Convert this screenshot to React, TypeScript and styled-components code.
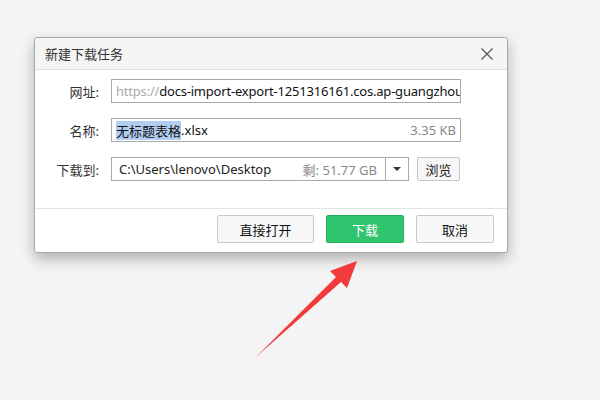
import styled, { createGlobalStyle } from 'styled-components';

const GlobalStyle = createGlobalStyle`
	html, body {
		margin: 0;
		padding: 0;
		background: #f4f4f4;
		font-family: "Noto Sans", "Noto Sans CJK SC", sans-serif;
	}
`;

const FONT = `"Noto Sans", "Noto Sans CJK SC", sans-serif`;

const Page = styled.div`
	position: relative;
	width: 600px;
	height: 400px;
	padding: 37px 0 0 34px;
	box-sizing: border-box;
	overflow: hidden;
`;

const Dialog = styled.div`
	width: 474px;
	background: #fff;
	border: 1px solid #a8a8a8;
	border-radius: 3px;
	box-sizing: border-box;
	box-shadow: 0 6px 14px rgba(0, 0, 0, 0.28);
	font-family: ${FONT};
	font-size: 13px;
	color: #222;
`;

const TitleBar = styled.div`
	height: 31px;
	display: flex;
	align-items: center;
	justify-content: space-between;
	padding: 0 14px 0 10px;
	background: #f5f5f5;
	border-bottom: 1px solid #e2e2e2;
	border-radius: 3px 3px 0 0;
`;

const Title = styled.span`
	font-size: 13px;
	color: #333;
`;

const Body = styled.div`
	height: 139px;
	padding-top: 9px;
	box-sizing: border-box;
	display: flex;
	flex-direction: column;
	gap: 15px;
	border-bottom: 1px solid #e4e4e4;
`;

const Row = styled.div`
	display: flex;
	align-items: center;
`;

const Label = styled.label`
	width: 64px;
	text-align: right;
	margin-right: 12px;
	color: #333;
	font-size: 13px;
`;

const Field = styled.div<{ $tight?: boolean }>`
	width: 350px;
	height: 24px;
	box-sizing: border-box;
	border: 1px solid #a9a9a9;
	display: flex;
	align-items: center;
	padding: 0 4px;
	white-space: nowrap;
	overflow: hidden;
	font-size: 13px;
	letter-spacing: ${(p) => (p.$tight ? '-0.2px' : '0')};
	color: #111;
`;

const Faint = styled.span`
	color: #aaa;
`;

const Selected = styled.span`
	background: #b1cdf2;
`;

const Spacer = styled.span`
	flex: 1;
`;

const Meta = styled.span`
	color: #888;
	font-size: 13px;
`;

const PathBox = styled.div`
	width: 298px;
	height: 24px;
	box-sizing: border-box;
	border: 1px solid #a9a9a9;
	display: flex;
	align-items: stretch;
`;

const PathText = styled.div`
	flex: 1;
	display: flex;
	align-items: center;
	padding: 0 8px 0 7px;
	font-size: 13px;
	color: #222;
	border-right: 1px solid #a9a9a9;
`;

const Caret = styled.div`
	width: 22px;
	display: flex;
	align-items: center;
	justify-content: center;
	&::after {
		content: '';
		border-left: 4px solid transparent;
		border-right: 4px solid transparent;
		border-top: 4px solid #333;
	}
`;

const SmallButton = styled.button`
	margin-left: 8px;
	width: 43px;
	height: 24px;
	border: 1px solid #c6c6c6;
	border-radius: 2px;
	background: #f7f7f7;
	font-family: ${FONT};
	font-size: 13px;
	color: #222;
	padding: 0;
`;

const Footer = styled.div`
	height: 43px;
	display: flex;
	align-items: flex-start;
	justify-content: flex-end;
	padding: 6px 13px 0 0;
	box-sizing: border-box;
	gap: 12px;
`;

const Button = styled.button<{ $primary?: boolean; $width: number }>`
	width: ${(p) => p.$width}px;
	height: 28px;
	border-radius: 2px;
	border: 1px solid ${(p) => (p.$primary ? '#23ad5b' : '#c9c9c9')};
	background: ${(p) => (p.$primary ? '#2fc46e' : '#f7f7f7')};
	color: ${(p) => (p.$primary ? '#fff' : '#111')};
	font-family: ${FONT};
	font-size: 13px;
	padding: 0;
`;

const Arrow = styled.svg`
	position: absolute;
	left: 250px;
	top: 255px;
`;

const CloseIcon = () => (
	<svg width="12" height="12" viewBox="0 0 12 12">
		<path d="M0.5 0.5 L11.5 11.5 M11.5 0.5 L0.5 11.5" stroke="#555" strokeWidth="1.2" fill="none" />
	</svg>
);

const App = () => {
	return (
		<Page>
			<GlobalStyle />
			<Dialog>
				<TitleBar>
					<Title>新建下载任务</Title>
					<CloseIcon />
				</TitleBar>
				<Body>
					<Row>
						<Label>网址:</Label>
						<Field $tight>
							<Faint>https://</Faint>docs-import-export-1251316161.cos.ap-guangzhou.myqcloud.com
						</Field>
					</Row>
					<Row>
						<Label>名称:</Label>
						<Field>
							<Selected>无标题表格</Selected>.xlsx
							<Spacer />
							<Meta>3.35 KB</Meta>
						</Field>
					</Row>
					<Row>
						<Label>下载到:</Label>
						<PathBox>
							<PathText>
								C:\Users\lenovo\Desktop
								<Spacer />
								<Meta>剩: 51.77 GB</Meta>
							</PathText>
							<Caret />
						</PathBox>
						<SmallButton>浏览</SmallButton>
					</Row>
				</Body>
				<Footer>
					<Button $width={97}>直接打开</Button>
					<Button $primary $width={78}>下载</Button>
					<Button $width={78}>取消</Button>
				</Footer>
			</Dialog>
			<Arrow width="120" height="110" viewBox="0 0 120 110">
				<path d="M6 102 L86 22 L80 16 L107 6 L97 33 L91 27 Z" fill="#f33a3a" />
			</Arrow>
		</Page>
	);
};

export default App;
